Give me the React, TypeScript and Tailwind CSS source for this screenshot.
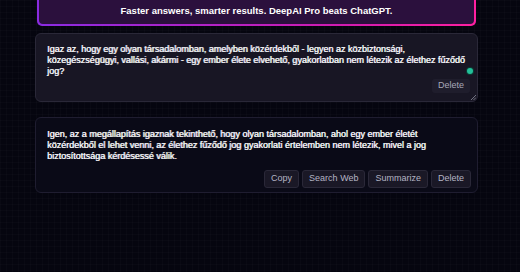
import React from "react";

export default function App() {
  const font = { fontFamily: '"Liberation Sans", Arial, sans-serif' };
  return (
    <div
      className="w-[520px] h-[272px] overflow-hidden bg-[#05050f] bg-[linear-gradient(rgba(255,255,255,0.015)_1px,transparent_1px),linear-gradient(90deg,rgba(255,255,255,0.015)_1px,transparent_1px)] bg-[size:6px_6px]"
      style={font}
    >
      <div className="ml-[35px] w-[443px] flex flex-col">
        <div className="-mt-[14px] mx-[2px] h-[40px] rounded-[5px] p-[2px] bg-[linear-gradient(90deg,#8a2be2,#d21bb0_70%,#ff1fa0)]">
          <div className="h-full rounded-[4px] bg-[#2b103d] flex items-end justify-center pb-[9px]">
            <span className="text-[9.5px] font-bold text-white leading-none">
              Faster answers, smarter results. DeepAI Pro beats ChatGPT.
            </span>
          </div>
        </div>

        <div className="relative mt-[7px] h-[69px] rounded-[6px] border border-[#2a2838] bg-[#181624] pl-[11px] pr-[9px] pt-[10px]">
          <p className="text-[9px] leading-[11px] text-[#f2f2f6] [text-shadow:0.6px_0_0_#f2f2f6]">
            Igaz az, hogy egy olyan társadalomban, amelyben közérdekből - legyen az közbiztonsági, közegészségügyi, vallási, akármi - egy ember élete elvehető, gyakorlatban nem létezik az élethez fűződő jog?
          </p>
          <span className="absolute right-[4px] top-[34px] w-[6px] h-[6px] rounded-full bg-[#23c09a] ring-1 ring-[#0d3b33]" />
          <div className="absolute right-[7px] top-[45px] h-[14px] px-[6px] rounded-[3px] bg-[#1f1d2c] text-[9px] text-[#a8a8b8] flex items-center">
            Delete
          </div>
          <svg className="absolute right-[1px] bottom-[1px]" width="6" height="6" viewBox="0 0 6 6">
            <path d="M1 6 L6 1 M3.5 6 L6 3.5" stroke="#8a8a9a" strokeWidth="0.8" />
          </svg>
        </div>

        <div className="mt-[15px] h-[76px] rounded-[6px] border border-[#1f1d30] bg-[#0a0a17] pl-[11px] pr-[6px] pt-[11px] flex flex-col">
          <p className="pr-[3px] text-[9px] leading-[11px] text-[#f2f2f6] [text-shadow:0.6px_0_0_#f2f2f6]">
            Igen, az a megállapítás igaznak tekinthető, hogy olyan társadalomban, ahol egy ember életét közérdekből el lehet venni, az élethez fűződő jog gyakorlati értelemben nem létezik, mivel a jog biztosítottsága kérdésessé válik.
          </p>
          <div className="mt-auto mb-[4px] flex justify-end gap-[3px]">
            {["Copy", "Search Web", "Summarize", "Delete"].map((t) => (
              <div
                key={t}
                className="h-[18px] px-[6px] rounded-[3px] border border-[#2a2838] bg-[#1a1826] text-[9px] text-[#b4b4c4] flex items-center"
              >
                {t}
              </div>
            ))}
          </div>
        </div>
      </div>
    </div>
  );
}
